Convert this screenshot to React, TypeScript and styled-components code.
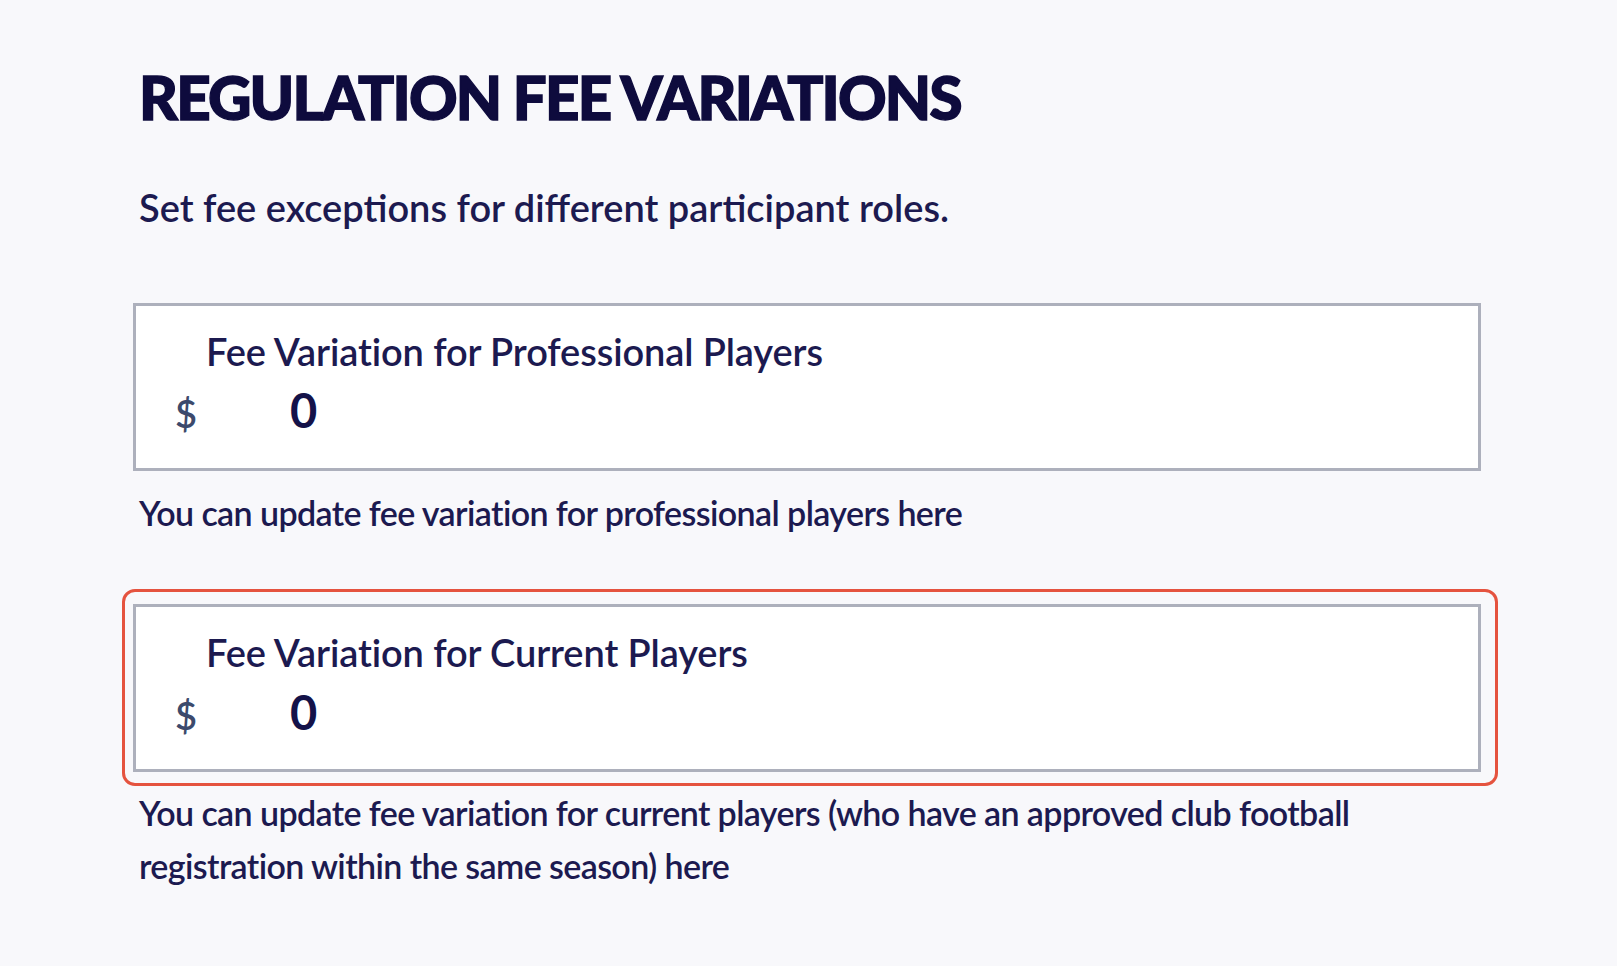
import React from "react";
import styled, { createGlobalStyle } from "styled-components";

const GlobalStyle = createGlobalStyle`
  html, body {
    margin: 0;
    padding: 0;
    background: #f8f8fb;
  }
  body {
    font-family: Lato, "Open Sans", "Liberation Sans", sans-serif;
    -webkit-font-smoothing: antialiased;
  }
`;

const Page = styled.main`
  min-height: 966px;
  box-sizing: border-box;
  padding: 61px 0 0 133px;
  background: #f8f8fb;
`;

const Content = styled.section`
  width: 1348px;
  display: flex;
  flex-direction: column;
`;

const Heading = styled.h1`
  margin: 0 0 0 6px;
  font-family: Lato, "Liberation Sans", sans-serif;
  font-weight: 900;
  font-size: 60px;
  line-height: 1.2;
  letter-spacing: -1.8px;
  color: #0e0b3d;
  -webkit-text-stroke: 1.4px #0e0b3d;
  text-transform: uppercase;
  white-space: nowrap;
`;

const Subtitle = styled.p`
  margin: 52px 0 0 6px;
  font-size: 38px;
  font-weight: 600;
  line-height: 1.2;
  letter-spacing: 0px;
  color: #1c1a50;
`;

const Field = styled.div`
  box-sizing: border-box;
  width: 1348px;
  height: 168px;
  background: #ffffff;
  border: 3px solid #adb0bc;
  padding: 23px 0 0 39px;
  display: flex;
  flex-direction: column;
  gap: 8px;
`;

const FieldLabel = styled.label`
  margin-left: 31px;
  font-size: 38px;
  font-weight: 600;
  line-height: 1.2;
  letter-spacing: -0.1px;
  color: #1c1a50;
`;

const AmountRow = styled.div`
  display: flex;
  align-items: baseline;
  line-height: 1.2;
`;

const Currency = styled.span`
  width: 115px;
  font-size: 38px;
  font-weight: 600;
  color: #3c4a6c;
`;

const Amount = styled.span`
  font-size: 47px;
  font-weight: 700;
  color: #141249;
`;

const Help = styled.p<{ $top: number }>`
  margin: ${(p) => p.$top}px 0 0 6px;
  font-size: 34px;
  font-weight: 600;
  line-height: 53px;
  letter-spacing: -0.6px;
  color: #1c1a50;
`;

const FirstHelp = styled(Help)`
  line-height: 1.2;
`;

const Highlight = styled.div`
  margin: 56px 0 0 -11px;
  width: fit-content;
  border: 3px solid #e5533f;
  border-radius: 13px;
  padding: 12px 14px 11px 8px;
`;

const Spacer = styled.div`
  height: 72px;
`;

type FieldProps = { label: string; value: string };

function FeeField({ label, value }: FieldProps) {
  return (
    <Field>
      <FieldLabel>{label}</FieldLabel>
      <AmountRow>
        <Currency>$</Currency>
        <Amount>{value}</Amount>
      </AmountRow>
    </Field>
  );
}

export default function App() {
  return (
    <>
      <GlobalStyle />
      <Page>
        <Content>
          <Heading>Regulation Fee Variations</Heading>
          <Subtitle>Set fee exceptions for different participant roles.</Subtitle>
          <Spacer />
          <FeeField label="Fee Variation for Professional Players" value="0" />
          <FirstHelp $top={22}>
            You can update fee variation for professional players here
          </FirstHelp>
          <Highlight>
            <FeeField label="Fee Variation for Current Players" value="0" />
          </Highlight>
          <Help $top={0}>
            You can update fee variation for current players (who have an approved club football
            registration within the same season) here
          </Help>
        </Content>
      </Page>
    </>
  );
}
